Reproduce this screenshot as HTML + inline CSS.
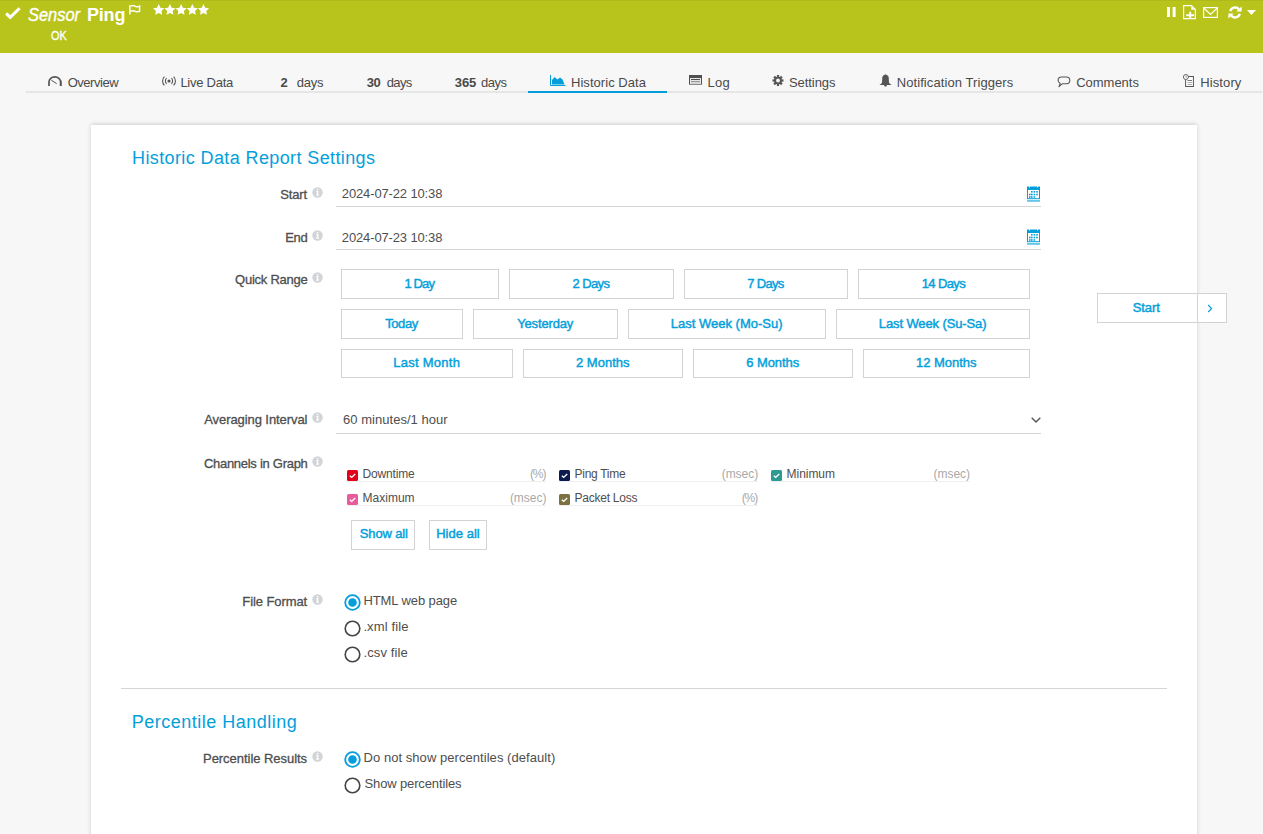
<!DOCTYPE html>
<html><head><meta charset="utf-8"><title>Sensor Ping</title>
<style>
html,body{margin:0;padding:0;width:1263px;height:834px;overflow:hidden;background:#f7f7f7;font-family:"Liberation Sans",sans-serif;}
.t{position:absolute;white-space:nowrap;line-height:1;}
.ic{position:absolute;display:block;}
#hdr{position:absolute;left:0;top:0;width:1263px;height:53px;background:#b8c41c;border-top:1px solid #b0ba19;box-sizing:border-box;}
#tabline{position:absolute;left:26px;top:91px;width:1236px;height:2px;background:#e6e6e6;}
#tabsel{position:absolute;left:528px;top:91px;width:139px;height:2px;background:#049fdb;}
#card{position:absolute;left:91px;top:125px;width:1106px;height:760px;background:#fff;box-shadow:0 -1px 4px rgba(0,0,0,0.17);}
.uline{position:absolute;height:1px;background:#d4d4d4;}
.btn{position:absolute;box-sizing:border-box;border:1px solid #d3d3d3;background:#fff;}
.cb{position:absolute;width:11px;height:11px;border-radius:1.5px;}
.cb svg{display:block}
.cline{position:absolute;height:1px;background:#efefef;}
</style></head><body>
<div id="hdr"></div>

<svg class="ic" style="left:5px;top:7px" width="16" height="13" viewBox="0 0 16 13"><path d="M1.2 6.4 L5.2 10.4 L14.6 1.2" stroke="#fff" stroke-width="3" fill="none"/></svg>
<svg class="ic" style="left:129px;top:5px" width="12" height="10" viewBox="0 0 12 10"><path d="M0.9 0.2 V9.6" stroke="#fff" stroke-width="1.5"/><path d="M1.6 1.0 C3.5 0.2 5 0.6 6.4 1.4 C7.8 2.1 9.2 2 10.6 1.2 V6.2 C9.2 7 7.8 7 6.4 6.3 C5 5.6 3.5 5.3 1.6 6.2" stroke="#fff" stroke-width="1.5" fill="none"/></svg>
<svg class="ic" style="left:153px;top:3.6px" width="58" height="12" viewBox="0 0 58 12"><path transform="translate(0.0,0)" d="M5.70 0.10 L7.40 3.65 L11.31 4.18 L8.46 6.90 L9.17 10.77 L5.70 8.90 L2.23 10.77 L2.94 6.90 L0.09 4.18 L4.00 3.65 Z" fill="#fff"/><path transform="translate(11.2,0)" d="M5.70 0.10 L7.40 3.65 L11.31 4.18 L8.46 6.90 L9.17 10.77 L5.70 8.90 L2.23 10.77 L2.94 6.90 L0.09 4.18 L4.00 3.65 Z" fill="#fff"/><path transform="translate(22.4,0)" d="M5.70 0.10 L7.40 3.65 L11.31 4.18 L8.46 6.90 L9.17 10.77 L5.70 8.90 L2.23 10.77 L2.94 6.90 L0.09 4.18 L4.00 3.65 Z" fill="#fff"/><path transform="translate(33.599999999999994,0)" d="M5.70 0.10 L7.40 3.65 L11.31 4.18 L8.46 6.90 L9.17 10.77 L5.70 8.90 L2.23 10.77 L2.94 6.90 L0.09 4.18 L4.00 3.65 Z" fill="#fff"/><path transform="translate(44.8,0)" d="M5.70 0.10 L7.40 3.65 L11.31 4.18 L8.46 6.90 L9.17 10.77 L5.70 8.90 L2.23 10.77 L2.94 6.90 L0.09 4.18 L4.00 3.65 Z" fill="#fff"/></svg>
<svg class="ic" style="left:1167px;top:7px" width="9" height="10" viewBox="0 0 9 10"><rect x="0" y="0" width="3" height="10" fill="#fff"/><rect x="5.6" y="0" width="3" height="10" fill="#fff"/></svg>
<svg class="ic" style="left:1183px;top:5px" width="13" height="15" viewBox="0 0 13 15"><path d="M0.6 0.6 H8.4 L12.4 4.6 V13.6 H0.6 Z" stroke="#fff" stroke-width="1.2" fill="none" stroke-linejoin="miter"/><path d="M8.3 1 V4.7 H12 Z" fill="#fff"/><path d="M7.2 6.8 V13.8 M3.2 10.2 H11.1" stroke="#fff" stroke-width="1.9"/></svg>
<svg class="ic" style="left:1203px;top:7px" width="15" height="12" viewBox="0 0 15 12"><rect x="0.6" y="0.6" width="13.8" height="9.8" stroke="#fff" stroke-width="1.2" fill="none"/><path d="M1 1.2 L7.5 7.4 L14 1.2" stroke="#fff" stroke-width="1.2" fill="none"/></svg>
<svg class="ic" style="left:1228px;top:6px" width="14" height="13" viewBox="0 0 14 13"><path d="M2.2 5.2 A5 5 0 0 1 11 3.4" stroke="#fff" stroke-width="2.4" fill="none"/><path d="M13.6 0.4 V5.6 H8.4 Z" fill="#fff"/><path d="M11.8 7.8 A5 5 0 0 1 3 9.6" stroke="#fff" stroke-width="2.4" fill="none"/><path d="M0.4 12.6 V7.4 H5.6 Z" fill="#fff"/></svg>
<svg class="ic" style="left:1247px;top:10px" width="9" height="5" viewBox="0 0 9 5"><path d="M0 0 H9 L4.5 5 Z" fill="#fff"/></svg>

<div id="tabline"></div><div id="tabsel"></div>

<svg class="ic" style="left:48px;top:76px" width="14" height="10" viewBox="0 0 14 10"><path d="M1.0 9.9 V5.9 A5.8 5.0 0 0 1 12.6 5.9 V9.9" stroke="#555" stroke-width="1.7" fill="none"/><path d="M13.0 4.5 V9.9" stroke="#555" stroke-width="1.2"/><path d="M3.3 4.2 L8.7 7.7" stroke="#555" stroke-width="1.0"/></svg>
<svg class="ic" style="left:162px;top:75.5px" width="14" height="10" viewBox="0 0 14 10"><circle cx="7" cy="5" r="1.6" fill="#555"/><path d="M4.6 2.2 A3.8 3.8 0 0 0 4.6 7.8 M9.4 2.2 A3.8 3.8 0 0 1 9.4 7.8" stroke="#555" stroke-width="1.1" fill="none"/><path d="M2.4 0.6 A6.2 6.2 0 0 0 2.4 9.4 M11.6 0.6 A6.2 6.2 0 0 1 11.6 9.4" stroke="#555" stroke-width="1.1" fill="none"/></svg>
<svg class="ic" style="left:550px;top:75px" width="16" height="11" viewBox="0 0 16 11"><path d="M0.5 0 V10.5 H15.5" stroke="#049fdb" stroke-width="1" fill="none"/><path d="M2 9.6 V5 L4.5 2 L7.5 4.5 L10 2.5 L12.5 4.5 L14.5 9.6 Z" fill="#049fdb"/></svg>
<svg class="ic" style="left:689px;top:75px" width="13" height="10" viewBox="0 0 13 10"><rect x="0" y="0" width="13" height="10" fill="#505050"/><rect x="1" y="3" width="11" height="6" fill="#e6e6e6"/><rect x="2" y="4" width="9" height="1" fill="#505050"/><rect x="2" y="6" width="9" height="1" fill="#9a9a9a"/><rect x="2" y="7.5" width="9" height="1" fill="#c4c4c4"/><rect x="0" y="9" width="13" height="1" fill="#8a8a8a"/></svg>
<svg class="ic" style="left:772px;top:75px" width="12" height="11" viewBox="0 0 12 12"><g fill="#555"><circle cx="6" cy="6" r="4.2"/><rect x="4.8" y="0" width="2.4" height="12"/><rect x="0" y="4.8" width="12" height="2.4"/><rect x="4.8" y="0" width="2.4" height="12" transform="rotate(45 6 6)"/><rect x="4.8" y="0" width="2.4" height="12" transform="rotate(-45 6 6)"/></g><circle cx="6" cy="6" r="2.1" fill="#f7f7f7"/></svg>
<svg class="ic" style="left:879px;top:74px" width="13" height="13" viewBox="0 0 13 13"><path d="M6.5 0.3 L8.6 1.6 Q9.6 2.2 9.7 3.5 L10 8.6 Q10.3 9.8 12.7 10.9 H0.3 Q2.7 9.8 3 8.6 L3.3 3.5 Q3.4 2.2 4.4 1.6 Z" fill="#555"/><path d="M5 10.9 H8 L7.4 12.6 H5.6 Z" fill="#555"/></svg>
<svg class="ic" style="left:1057px;top:75.5px" width="14" height="12" viewBox="0 0 14 12"><path d="M4.6 1.0 H9.4 C11.4 1.0 12.8 2.4 12.8 4.3 C12.8 6.3 11.4 7.8 9.4 7.8 H5.2 L2.0 10.6 L3.2 7.4 C1.9 6.8 1.1 5.7 1.1 4.3 C1.1 2.4 2.6 1.0 4.6 1.0 Z" stroke="#555" stroke-width="1.1" fill="none" stroke-linejoin="round"/></svg>
<svg class="ic" style="left:1182px;top:74px" width="13" height="13" viewBox="0 0 13 13"><rect x="3.6" y="2.5" width="7.8" height="10" fill="#fff" stroke="#555" stroke-width="1"/><rect x="5.5" y="6" width="4.5" height="1" fill="#777"/><rect x="5.5" y="8" width="4.5" height="1" fill="#aaa"/><rect x="5.5" y="10" width="4.5" height="1" fill="#aaa"/><circle cx="3.9" cy="3" r="2.5" fill="#fff" stroke="#555" stroke-width="0.9"/><path d="M3.9 1.6 V3.2 H4.9" stroke="#777" stroke-width="0.7" fill="none"/></svg>

<div id="card"></div>
<div class="uline" style="left:336px;top:206px;width:705px"></div>
<div class="uline" style="left:336px;top:249px;width:705px"></div>
<div class="uline" style="left:336px;top:433px;width:705px"></div>
<div class="uline" style="left:121px;top:688px;width:1046px"></div>
<svg class="ic" style="left:1027px;top:185.5px" width="14" height="16" viewBox="0 0 14 16"><g fill="#049fdb"><rect x="0" y="0.5" width="13" height="3.5"/><rect x="0" y="3" width="1" height="10"/><rect x="12" y="3" width="1" height="10"/><rect x="0" y="12.2" width="13" height="1"/><rect x="0" y="14.4" width="13" height="1.1"/>
<rect x="4" y="5" width="1.6" height="1.6"/><rect x="6.6" y="5" width="1.6" height="1.6"/><rect x="9.2" y="5" width="1.6" height="1.6"/>
<rect x="2" y="7.7" width="1.6" height="1.6"/><rect x="4" y="7.7" width="1.6" height="1.6"/><rect x="6.6" y="7.7" width="1.6" height="1.6"/><rect x="9.2" y="7.7" width="1.6" height="1.6"/>
<rect x="2" y="10.2" width="1.6" height="1.6"/><rect x="4" y="10.2" width="1.6" height="1.6"/><rect x="6.6" y="10.2" width="1.6" height="1.6"/></g><g fill="#fff"><rect x="2" y="0" width="1" height="1.4"/><rect x="10" y="0" width="1" height="1.4"/></g></svg><svg class="ic" style="left:1027px;top:228.5px" width="14" height="16" viewBox="0 0 14 16"><g fill="#049fdb"><rect x="0" y="0.5" width="13" height="3.5"/><rect x="0" y="3" width="1" height="10"/><rect x="12" y="3" width="1" height="10"/><rect x="0" y="12.2" width="13" height="1"/><rect x="0" y="14.4" width="13" height="1.1"/>
<rect x="4" y="5" width="1.6" height="1.6"/><rect x="6.6" y="5" width="1.6" height="1.6"/><rect x="9.2" y="5" width="1.6" height="1.6"/>
<rect x="2" y="7.7" width="1.6" height="1.6"/><rect x="4" y="7.7" width="1.6" height="1.6"/><rect x="6.6" y="7.7" width="1.6" height="1.6"/><rect x="9.2" y="7.7" width="1.6" height="1.6"/>
<rect x="2" y="10.2" width="1.6" height="1.6"/><rect x="4" y="10.2" width="1.6" height="1.6"/><rect x="6.6" y="10.2" width="1.6" height="1.6"/></g><g fill="#fff"><rect x="2" y="0" width="1" height="1.4"/><rect x="10" y="0" width="1" height="1.4"/></g></svg>
<svg class="ic" style="left:1031px;top:417px" width="10" height="6" viewBox="0 0 10 6"><path d="M0.7 0.7 L5 5 L9.3 0.7" stroke="#555" stroke-width="1.4" fill="none"/></svg>
<div class="btn" style="left:341px;top:269px;width:158px;height:30px"></div><div class="btn" style="left:509px;top:269px;width:165px;height:30px"></div><div class="btn" style="left:684px;top:269px;width:164px;height:30px"></div><div class="btn" style="left:858px;top:269px;width:172px;height:30px"></div><div class="btn" style="left:341px;top:309px;width:122px;height:30px"></div><div class="btn" style="left:473px;top:309px;width:145px;height:30px"></div><div class="btn" style="left:628px;top:309px;width:198px;height:30px"></div><div class="btn" style="left:836px;top:309px;width:194px;height:30px"></div><div class="btn" style="left:341px;top:349px;width:172px;height:29px"></div><div class="btn" style="left:523px;top:349px;width:160px;height:29px"></div><div class="btn" style="left:693px;top:349px;width:160px;height:29px"></div><div class="btn" style="left:863px;top:349px;width:167px;height:29px"></div>
<div class="btn" style="left:1097px;top:293px;width:101px;height:30px"></div>
<div class="btn" style="left:1197px;top:293px;width:30px;height:30px"></div>
<svg class="ic" style="left:1207px;top:304px" width="6" height="9" viewBox="0 0 6 9"><path d="M1.2 1 L4.6 4.5 L1.2 8" stroke="#049fdb" stroke-width="1.15" fill="none"/></svg>
<div class="btn" style="left:351px;top:520px;width:64px;height:30px"></div>
<div class="btn" style="left:429px;top:520px;width:58px;height:30px"></div>
<div class="cline" style="left:559px;top:505px;width:199.20000000000005px"></div><div class="cline" style="left:347px;top:505px;width:199.39999999999998px"></div><div class="cline" style="left:771px;top:481px;width:199px"></div><div class="cline" style="left:559px;top:481px;width:199.20000000000005px"></div><div class="cline" style="left:347px;top:481px;width:199.39999999999998px"></div><div class="cb" style="left:347px;top:470px;background:#e3001b"><svg width="11" height="11" viewBox="0 0 11 11"><path d="M2.9 5.7 L4.7 7.4 L8.2 4" stroke="#fff" stroke-width="1.4" fill="none"/></svg></div><div class="cb" style="left:559px;top:470px;background:#0c1a4f"><svg width="11" height="11" viewBox="0 0 11 11"><path d="M2.9 5.7 L4.7 7.4 L8.2 4" stroke="#fff" stroke-width="1.4" fill="none"/></svg></div><div class="cb" style="left:771px;top:470px;background:#2e9b93"><svg width="11" height="11" viewBox="0 0 11 11"><path d="M2.9 5.7 L4.7 7.4 L8.2 4" stroke="#fff" stroke-width="1.4" fill="none"/></svg></div><div class="cb" style="left:347px;top:494px;background:#e85a9b"><svg width="11" height="11" viewBox="0 0 11 11"><path d="M2.9 5.7 L4.7 7.4 L8.2 4" stroke="#fff" stroke-width="1.4" fill="none"/></svg></div><div class="cb" style="left:559px;top:494px;background:#7d7141"><svg width="11" height="11" viewBox="0 0 11 11"><path d="M2.9 5.7 L4.7 7.4 L8.2 4" stroke="#fff" stroke-width="1.4" fill="none"/></svg></div>
<svg class="ic" style="left:312px;top:186.6px" width="11" height="11" viewBox="0 0 11 11"><circle cx="5.5" cy="5.5" r="5.2" fill="#d3d4d7"/><g fill="#fff"><rect x="4.9" y="1.9" width="1.4" height="1.4"/><rect x="4.2" y="4.1" width="2.1" height="1"/><rect x="4.9" y="4.1" width="1.4" height="4.2"/><rect x="4.0" y="7.6" width="3.1" height="1"/></g></svg><svg class="ic" style="left:312px;top:229.6px" width="11" height="11" viewBox="0 0 11 11"><circle cx="5.5" cy="5.5" r="5.2" fill="#d3d4d7"/><g fill="#fff"><rect x="4.9" y="1.9" width="1.4" height="1.4"/><rect x="4.2" y="4.1" width="2.1" height="1"/><rect x="4.9" y="4.1" width="1.4" height="4.2"/><rect x="4.0" y="7.6" width="3.1" height="1"/></g></svg><svg class="ic" style="left:312px;top:271.6px" width="11" height="11" viewBox="0 0 11 11"><circle cx="5.5" cy="5.5" r="5.2" fill="#d3d4d7"/><g fill="#fff"><rect x="4.9" y="1.9" width="1.4" height="1.4"/><rect x="4.2" y="4.1" width="2.1" height="1"/><rect x="4.9" y="4.1" width="1.4" height="4.2"/><rect x="4.0" y="7.6" width="3.1" height="1"/></g></svg><svg class="ic" style="left:312px;top:411.6px" width="11" height="11" viewBox="0 0 11 11"><circle cx="5.5" cy="5.5" r="5.2" fill="#d3d4d7"/><g fill="#fff"><rect x="4.9" y="1.9" width="1.4" height="1.4"/><rect x="4.2" y="4.1" width="2.1" height="1"/><rect x="4.9" y="4.1" width="1.4" height="4.2"/><rect x="4.0" y="7.6" width="3.1" height="1"/></g></svg><svg class="ic" style="left:312px;top:455.6px" width="11" height="11" viewBox="0 0 11 11"><circle cx="5.5" cy="5.5" r="5.2" fill="#d3d4d7"/><g fill="#fff"><rect x="4.9" y="1.9" width="1.4" height="1.4"/><rect x="4.2" y="4.1" width="2.1" height="1"/><rect x="4.9" y="4.1" width="1.4" height="4.2"/><rect x="4.0" y="7.6" width="3.1" height="1"/></g></svg><svg class="ic" style="left:312px;top:593.6px" width="11" height="11" viewBox="0 0 11 11"><circle cx="5.5" cy="5.5" r="5.2" fill="#d3d4d7"/><g fill="#fff"><rect x="4.9" y="1.9" width="1.4" height="1.4"/><rect x="4.2" y="4.1" width="2.1" height="1"/><rect x="4.9" y="4.1" width="1.4" height="4.2"/><rect x="4.0" y="7.6" width="3.1" height="1"/></g></svg><svg class="ic" style="left:312px;top:750.6px" width="11" height="11" viewBox="0 0 11 11"><circle cx="5.5" cy="5.5" r="5.2" fill="#d3d4d7"/><g fill="#fff"><rect x="4.9" y="1.9" width="1.4" height="1.4"/><rect x="4.2" y="4.1" width="2.1" height="1"/><rect x="4.9" y="4.1" width="1.4" height="4.2"/><rect x="4.0" y="7.6" width="3.1" height="1"/></g></svg>
<svg class="ic" style="left:344px;top:594px" width="17" height="17" viewBox="0 0 17 17"><circle cx="8.5" cy="8.5" r="7.3" fill="#fff" stroke="#049fdb" stroke-width="1.8"/><circle cx="8.5" cy="8.5" r="4.3" fill="#049fdb"/></svg><svg class="ic" style="left:344px;top:620px" width="17" height="17" viewBox="0 0 17 17"><circle cx="8.5" cy="8.5" r="7.3" fill="#fff" stroke="#444" stroke-width="1.6"/></svg><svg class="ic" style="left:344px;top:646px" width="17" height="17" viewBox="0 0 17 17"><circle cx="8.5" cy="8.5" r="7.3" fill="#fff" stroke="#444" stroke-width="1.6"/></svg><svg class="ic" style="left:344px;top:751px" width="17" height="17" viewBox="0 0 17 17"><circle cx="8.5" cy="8.5" r="7.3" fill="#fff" stroke="#049fdb" stroke-width="1.8"/><circle cx="8.5" cy="8.5" r="4.3" fill="#049fdb"/></svg><svg class="ic" style="left:344px;top:777px" width="17" height="17" viewBox="0 0 17 17"><circle cx="8.5" cy="8.5" r="7.3" fill="#fff" stroke="#444" stroke-width="1.6"/></svg>
<span class="t" style="left:28.00px;top:6px;font-size:18px;font-style:italic;transform:scaleX(0.9132);transform-origin:0px 0;color:#fff;-webkit-text-stroke:0.35px #fff;">Sensor</span><span class="t" style="left:87.00px;top:6px;font-size:18px;font-weight:bold;letter-spacing:-0.201px;color:#fff;">Ping</span><span class="t" style="left:51.00px;top:30px;font-size:12px;transform:scaleX(0.9115);transform-origin:0px 0;color:#fff;-webkit-text-stroke:0.3px #fff;">OK</span><span class="t" style="left:67.70px;top:76px;font-size:13px;letter-spacing:-0.470px;color:#4a4a4a;">Overview</span><span class="t" style="left:180.40px;top:76px;font-size:13px;letter-spacing:-0.249px;color:#4a4a4a;">Live Data</span><span class="t" style="left:280.40px;top:76px;font-size:13px;font-weight:bold;color:#4a4a4a;">2</span><span class="t" style="left:296.80px;top:76px;font-size:13px;letter-spacing:-0.287px;color:#4a4a4a;">days</span><span class="t" style="left:366.80px;top:76px;font-size:13px;font-weight:bold;letter-spacing:-0.430px;color:#4a4a4a;">30</span><span class="t" style="left:386.80px;top:76px;font-size:13px;letter-spacing:-0.687px;color:#4a4a4a;">days</span><span class="t" style="left:454.70px;top:76px;font-size:13px;font-weight:bold;letter-spacing:-0.030px;color:#4a4a4a;">365</span><span class="t" style="left:481.10px;top:76px;font-size:13px;letter-spacing:-0.520px;color:#4a4a4a;">days</span><span class="t" style="left:571.00px;top:76px;font-size:13px;letter-spacing:0.044px;color:#4a4a4a;">Historic Data</span><span class="t" style="left:707.50px;top:76px;font-size:13px;letter-spacing:0.320px;color:#4a4a4a;">Log</span><span class="t" style="left:789.00px;top:76px;font-size:13px;letter-spacing:-0.068px;color:#4a4a4a;">Settings</span><span class="t" style="left:896.70px;top:76px;font-size:13px;letter-spacing:0.084px;color:#4a4a4a;">Notification Triggers</span><span class="t" style="left:1076.20px;top:76px;font-size:13px;letter-spacing:-0.021px;color:#4a4a4a;">Comments</span><span class="t" style="left:1200.30px;top:76px;font-size:13px;letter-spacing:0.092px;color:#4a4a4a;">History</span><span class="t" style="left:132.00px;top:149px;font-size:18px;letter-spacing:0.390px;color:#049fdb;">Historic Data Report Settings</span><span class="t" style="left:131.70px;top:713px;font-size:18px;letter-spacing:0.495px;color:#049fdb;">Percentile Handling</span><span class="t" style="left:280.20px;top:188px;font-size:13px;-webkit-text-stroke:0.3px #4e4e4e;letter-spacing:-0.110px;color:#4e4e4e;">Start</span><span class="t" style="left:285.20px;top:231px;font-size:13px;-webkit-text-stroke:0.3px #4e4e4e;letter-spacing:-0.250px;color:#4e4e4e;">End</span><span class="t" style="left:235.00px;top:273px;font-size:13px;-webkit-text-stroke:0.3px #4e4e4e;letter-spacing:-0.232px;color:#4e4e4e;">Quick Range</span><span class="t" style="left:204.20px;top:413px;font-size:13px;-webkit-text-stroke:0.3px #4e4e4e;letter-spacing:-0.074px;color:#4e4e4e;">Averaging Interval</span><span class="t" style="left:203.90px;top:457px;font-size:13px;-webkit-text-stroke:0.3px #4e4e4e;letter-spacing:-0.279px;color:#4e4e4e;">Channels in Graph</span><span class="t" style="left:242.30px;top:595px;font-size:13px;-webkit-text-stroke:0.3px #4e4e4e;letter-spacing:-0.082px;color:#4e4e4e;">File Format</span><span class="t" style="left:203.00px;top:752px;font-size:13px;-webkit-text-stroke:0.3px #4e4e4e;letter-spacing:-0.039px;color:#4e4e4e;">Percentile Results</span><span class="t" style="left:341.80px;top:187px;font-size:13px;letter-spacing:-0.134px;color:#4e4e4e;">2024-07-22 10:38</span><span class="t" style="left:341.80px;top:231px;font-size:13px;letter-spacing:-0.134px;color:#4e4e4e;">2024-07-23 10:38</span><span class="t" style="left:343.00px;top:413px;font-size:13px;letter-spacing:0.035px;color:#4e4e4e;">60 minutes/1 hour</span><span class="t" style="left:404.52px;top:277px;font-size:13px;-webkit-text-stroke:0.45px #049fdb;letter-spacing:-0.877px;color:#049fdb;">1 Day</span><span class="t" style="left:572.52px;top:277px;font-size:13px;-webkit-text-stroke:0.45px #049fdb;letter-spacing:-0.602px;color:#049fdb;">2 Days</span><span class="t" style="left:747.23px;top:277px;font-size:13px;-webkit-text-stroke:0.45px #049fdb;letter-spacing:-0.682px;color:#049fdb;">7 Days</span><span class="t" style="left:921.73px;top:277px;font-size:13px;-webkit-text-stroke:0.45px #049fdb;letter-spacing:-0.607px;color:#049fdb;">14 Days</span><span class="t" style="left:385.32px;top:317px;font-size:13px;-webkit-text-stroke:0.45px #049fdb;letter-spacing:-0.460px;color:#049fdb;">Today</span><span class="t" style="left:517.23px;top:317px;font-size:13px;-webkit-text-stroke:0.45px #049fdb;letter-spacing:-0.161px;color:#049fdb;">Yesterday</span><span class="t" style="left:670.77px;top:317px;font-size:13px;-webkit-text-stroke:0.45px #049fdb;color:#049fdb;">Last Week (Mo-Su)</span><span class="t" style="left:878.77px;top:317px;font-size:13px;-webkit-text-stroke:0.45px #049fdb;letter-spacing:-0.113px;color:#049fdb;">Last Week (Su-Sa)</span><span class="t" style="left:393.32px;top:356px;font-size:13px;-webkit-text-stroke:0.45px #049fdb;letter-spacing:0.252px;color:#049fdb;">Last Month</span><span class="t" style="left:575.92px;top:356px;font-size:13px;-webkit-text-stroke:0.45px #049fdb;letter-spacing:0.025px;color:#049fdb;">2 Months</span><span class="t" style="left:746.17px;top:356px;font-size:13px;-webkit-text-stroke:0.45px #049fdb;letter-spacing:-0.046px;color:#049fdb;">6 Months</span><span class="t" style="left:916.02px;top:356px;font-size:13px;-webkit-text-stroke:0.45px #049fdb;letter-spacing:-0.032px;color:#049fdb;">12 Months</span><span class="t" style="left:1132.70px;top:301px;font-size:13px;-webkit-text-stroke:0.45px #049fdb;letter-spacing:-0.060px;color:#049fdb;">Start</span><span class="t" style="left:359.80px;top:527px;font-size:13px;-webkit-text-stroke:0.45px #049fdb;letter-spacing:-0.150px;color:#049fdb;">Show all</span><span class="t" style="left:436.20px;top:527px;font-size:13px;-webkit-text-stroke:0.45px #049fdb;letter-spacing:0.019px;color:#049fdb;">Hide all</span><span class="t" style="left:362.60px;top:468px;font-size:12px;letter-spacing:-0.182px;color:#4e4e4e;">Downtime</span><span class="t" style="left:529.90px;top:468px;font-size:12px;letter-spacing:-1.083px;color:#a9a9a9;">(%)</span><span class="t" style="left:574.60px;top:468px;font-size:12px;letter-spacing:-0.300px;color:#4e4e4e;">Ping Time</span><span class="t" style="left:721.70px;top:468px;font-size:12px;letter-spacing:-0.033px;color:#a9a9a9;">(msec)</span><span class="t" style="left:786.60px;top:468px;font-size:12px;letter-spacing:-0.045px;color:#4e4e4e;">Minimum</span><span class="t" style="left:933.50px;top:468px;font-size:12px;letter-spacing:-0.033px;color:#a9a9a9;">(msec)</span><span class="t" style="left:362.60px;top:492px;font-size:12px;color:#4e4e4e;">Maximum</span><span class="t" style="left:509.90px;top:492px;font-size:12px;letter-spacing:-0.033px;color:#a9a9a9;">(msec)</span><span class="t" style="left:574.60px;top:492px;font-size:12px;letter-spacing:-0.257px;color:#4e4e4e;">Packet Loss</span><span class="t" style="left:741.70px;top:492px;font-size:12px;letter-spacing:-1.083px;color:#a9a9a9;">(%)</span><span class="t" style="left:363.40px;top:594px;font-size:13px;letter-spacing:-0.087px;color:#4e4e4e;">HTML web page</span><span class="t" style="left:363.40px;top:620px;font-size:13px;letter-spacing:0.121px;color:#4e4e4e;">.xml file</span><span class="t" style="left:363.40px;top:646px;font-size:13px;letter-spacing:0.136px;color:#4e4e4e;">.csv file</span><span class="t" style="left:363.50px;top:751px;font-size:13px;letter-spacing:0.053px;color:#4e4e4e;">Do not show percentiles (default)</span><span class="t" style="left:364.50px;top:777px;font-size:13px;letter-spacing:-0.133px;color:#4e4e4e;">Show percentiles</span>
</body></html>
